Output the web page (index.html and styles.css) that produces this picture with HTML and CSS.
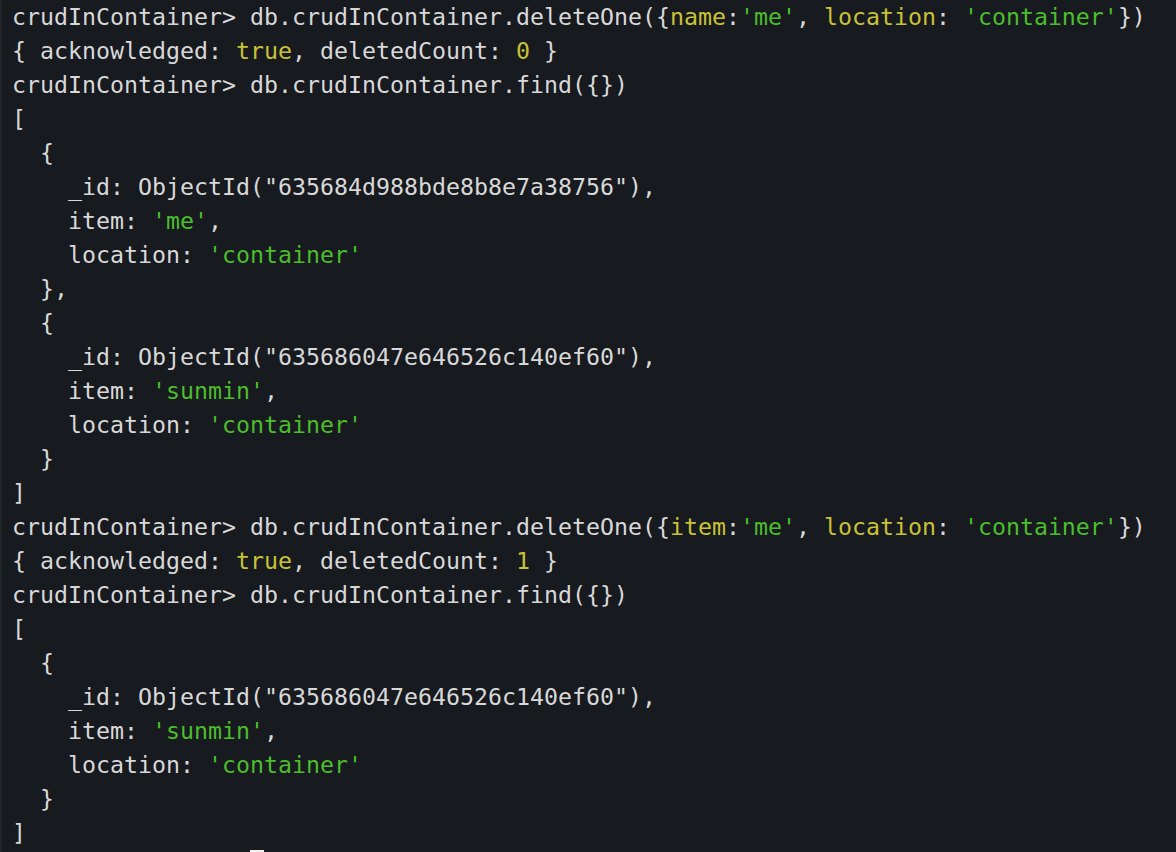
FILE: index.html
```html
<!DOCTYPE html>
<html>
<head>
<meta charset="utf-8">
<link rel="stylesheet" href="styles.css">
</head>
<body>
<div class="term">
<div class="ln">crudInContainer&gt; db.crudInContainer.deleteOne({<span class="y">name</span>:<span class="g">'me'</span>, <span class="y">location</span>: <span class="g">'container'</span>})</div>
<div class="ln">{ acknowledged: <span class="y">true</span>, deletedCount: <span class="y">0</span> }</div>
<div class="ln">crudInContainer&gt; db.crudInContainer.find({})</div>
<div class="ln">[</div>
<div class="ln">  {</div>
<div class="ln">    _id: ObjectId("635684d988bde8b8e7a38756"),</div>
<div class="ln">    item: <span class="g">'me'</span>,</div>
<div class="ln">    location: <span class="g">'container'</span></div>
<div class="ln">  },</div>
<div class="ln">  {</div>
<div class="ln">    _id: ObjectId("635686047e646526c140ef60"),</div>
<div class="ln">    item: <span class="g">'sunmin'</span>,</div>
<div class="ln">    location: <span class="g">'container'</span></div>
<div class="ln">  }</div>
<div class="ln">]</div>
<div class="ln">crudInContainer&gt; db.crudInContainer.deleteOne({<span class="y">item</span>:<span class="g">'me'</span>, <span class="y">location</span>: <span class="g">'container'</span>})</div>
<div class="ln">{ acknowledged: <span class="y">true</span>, deletedCount: <span class="y">1</span> }</div>
<div class="ln">crudInContainer&gt; db.crudInContainer.find({})</div>
<div class="ln">[</div>
<div class="ln">  {</div>
<div class="ln">    _id: ObjectId("635686047e646526c140ef60"),</div>
<div class="ln">    item: <span class="g">'sunmin'</span>,</div>
<div class="ln">    location: <span class="g">'container'</span></div>
<div class="ln">  }</div>
<div class="ln">]</div>
<div class="ln">crudInContainer&gt; <span class="cursor"></span></div>
</div>
</body>
</html>
```
FILE: styles.css
```css
html, body {
  margin: 0;
  padding: 0;
  background: #171a1f;
  height: 100%;
  overflow: hidden;
}
.term {
  box-sizing: border-box;
  height: 852px;
  padding: 0 0 0 10px;
  border-left: 2px solid #202328;
  font-family: "DejaVu Sans Mono", monospace;
  font-size: 23.25px;
  line-height: 34px;
  color: #d8d8d8;
}
.ln {
  white-space: pre;
  height: 34px;
}
.y { color: #c9c236; }
.g { color: #4cbd2c; }
.cursor {
  display: inline-block;
  width: 14px;
  height: 34px;
  background: #f0f0f0;
  vertical-align: top;
}
```
